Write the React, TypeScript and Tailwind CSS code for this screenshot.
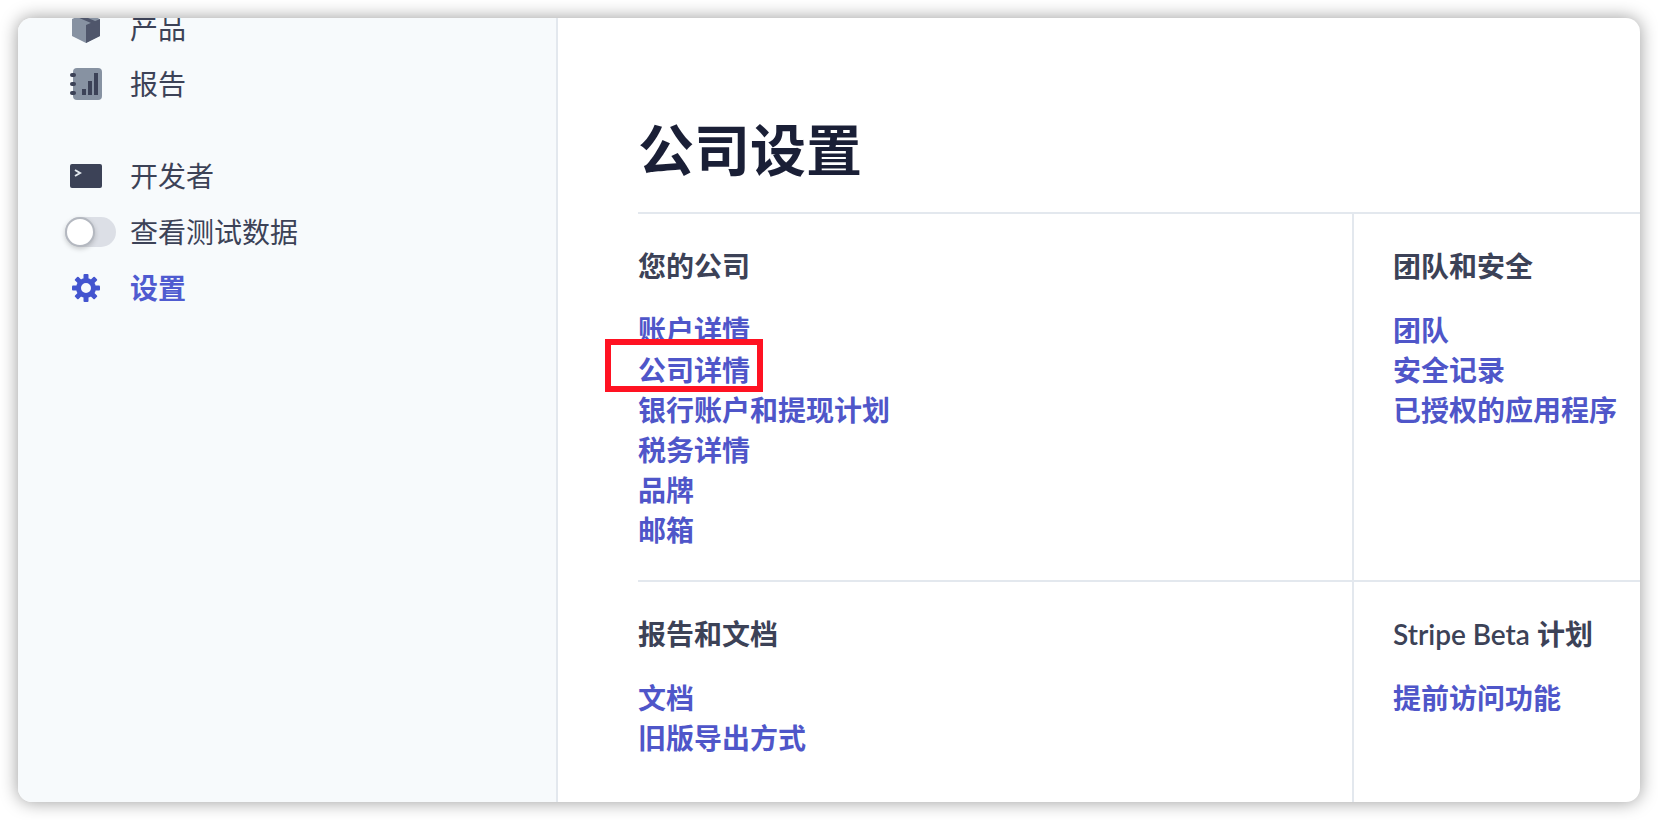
const sections = [
  {
    title: "您的公司",
    links: ["账户详情", "公司详情", "银行账户和提现计划", "税务详情", "品牌", "邮箱"],
  },
  {
    title: "团队和安全",
    links: ["团队", "安全记录", "已授权的应用程序"],
  },
  {
    title: "报告和文档",
    links: ["文档", "旧版导出方式"],
  },
  {
    title: "Stripe Beta 计划",
    links: ["提前访问功能"],
  },
];

const BoxIcon = () => (
  <svg width="30" height="30" viewBox="0 0 30 30">
    <path d="M1 6 15 0l14 6v17l-14 7-14-7z" fill="#8792a2" />
    <path d="M15 12 29 6v17l-14 7z" fill="#4f566b" />
    <path d="M6 4 20 10v5l4-2V8L10 2z" fill="#4f566b" />
  </svg>
);

const ReportIcon = () => (
  <svg width="32" height="32" viewBox="0 0 32 32">
    <rect x="3" y="0" width="29" height="32" rx="4" fill="#8792a2" />
    <rect x="0" y="5" width="6" height="4" rx="2" fill="#3c4257" />
    <rect x="0" y="14" width="6" height="4" rx="2" fill="#3c4257" />
    <rect x="0" y="23" width="6" height="4" rx="2" fill="#3c4257" />
    <rect x="12" y="21" width="4" height="6" fill="#3c4257" />
    <rect x="18" y="13" width="4" height="14" fill="#3c4257" />
    <rect x="24" y="5" width="4" height="22" fill="#3c4257" />
  </svg>
);

const TerminalIcon = () => (
  <svg width="32" height="24" viewBox="0 0 32 24">
    <rect width="32" height="24" rx="2" fill="#3c4257" />
    <path d="m5 6 5 3-5 3" fill="none" stroke="#e3e8ee" strokeWidth="2" />
  </svg>
);

const GearIcon = () => (
  <svg width="30" height="30" viewBox="0 0 30 30">
    {[0, 45, 90, 135, 180, 225, 270, 315].map((deg) => (
      <rect key={deg} x="12.5" y="1" width="5" height="7" rx="1" fill="#4354cf" transform={`rotate(${deg} 15 15)`} />
    ))}
    <circle cx="15" cy="15" r="7.5" fill="none" stroke="#4354cf" strokeWidth="5" />
  </svg>
);

const NavItem = ({ icon, label, active }: { icon: React.ReactNode; label: string; active?: boolean }) => (
  <div className={`flex h-14 items-center text-[28px] ${active ? "font-bold text-[#4f5bd0]" : "text-[#3c4257]"}`}>
    <div className="flex w-[130px] items-center justify-center pl-[6px]">{icon}</div>
    <span className="-ml-[18px]">{label}</span>
  </div>
);

const Section = ({ title, links, className }: { title: string; links: string[]; className: string }) => (
  <div className={className}>
    <h2 className="text-[28px] leading-10 font-semibold text-[#3c4257]">{title}</h2>
    <ul className="mt-6">
      {links.map((link) => (
        <li key={link} className="text-[28px] leading-10 font-semibold text-[#4f56c9]">
          {link}
        </li>
      ))}
    </ul>
  </div>
);

export default function App() {
  return (
    <div className="h-[820px] overflow-hidden bg-white p-[18px] font-['Lato','Noto_Sans_CJK_SC',sans-serif]">
      <div className="flex h-[784px] overflow-hidden rounded-[14px] bg-white shadow-[0_0_18px_rgba(0,0,0,0.4)]">
        <aside className="w-[540px] shrink-0 border-r-2 border-[#e3e8ee] bg-[#f7fafc]">
          <div className="-mt-[18px]">
            <NavItem icon={<BoxIcon />} label="产品" />
            <NavItem icon={<ReportIcon />} label="报告" />
            <div className="mt-9">
              <NavItem icon={<TerminalIcon />} label="开发者" />
              <div className="flex h-14 items-center text-[28px] text-[#3c4257]">
                <div className="ml-[47px] h-[30px] w-[51px] rounded-full bg-[#dcdfe6]">
                  <div className="h-[30px] w-[30px] rounded-full border-2 border-[#b4b8c0] bg-white shadow-[0_2px_5px_rgba(0,0,0,0.2)]" />
                </div>
                <span className="ml-[14px]">查看测试数据</span>
              </div>
              <NavItem icon={<GearIcon />} label="设置" active />
            </div>
          </div>
        </aside>

        <main className="flex min-w-0 flex-1 flex-col pt-[100px] pl-[80px]">
          <h1 className="text-[56px] leading-16 font-bold text-[#1a1f36]">公司设置</h1>
          <div className="mt-[30px] grid h-[368px] grid-cols-[714px_1fr] border-t-2 border-[#e3e8ee]">
            <div className="relative">
              <Section {...sections[0]} className="pt-[32px]" />
              <div className="absolute top-[125px] -left-[33px] h-[53px] w-[158px] border-[6px] border-[#ff1222]" />
            </div>
            <Section {...sections[1]} className="border-l-2 border-[#e3e8ee] pt-[32px] pl-[39px]" />
          </div>
          <div className="grid flex-1 grid-cols-[714px_1fr] border-t-2 border-[#e3e8ee]">
            <Section {...sections[2]} className="pt-[32px]" />
            <Section {...sections[3]} className="border-l-2 border-[#e3e8ee] pt-[32px] pl-[39px]" />
          </div>
        </main>
      </div>
    </div>
  );
}
